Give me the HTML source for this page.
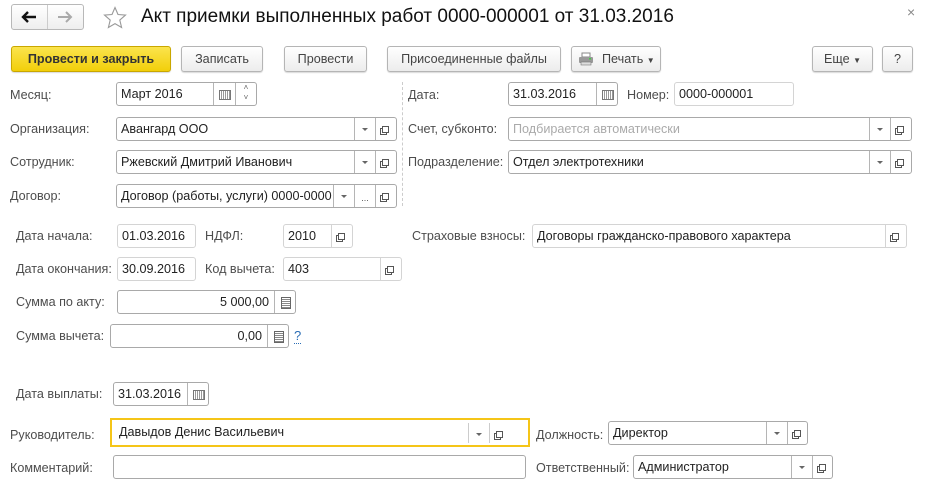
<!DOCTYPE html>
<html><head><meta charset="utf-8"><style>
*{box-sizing:border-box;margin:0;padding:0}
body{width:926px;height:502px;background:#fff;font-family:"Liberation Sans",Arial,sans-serif;font-size:12.6px;color:#333;position:relative;overflow:hidden}
.a{position:absolute}
.lbl{position:absolute;color:#4d4d4d;font-size:12.6px;line-height:16px}
.btn{position:absolute;top:46px;height:26px;border:1px solid #b5b5b5;border-radius:3px;background:linear-gradient(#fff,#ececec);box-shadow:0 1px 1px rgba(0,0,0,.15);text-align:center;line-height:24px;color:#444;font-size:12.6px}
.f{position:absolute;height:24px;border:1px solid #a9a9a9;border-radius:3px;background:#fff;line-height:22px;padding-left:4px;color:#222;white-space:nowrap;overflow:hidden}
.f.l{border-color:#d4d4d4}
.b{position:absolute;top:0;height:22px;width:21px;border-left:1px solid #b5b5b5;text-align:center;line-height:22px;font-size:9px;color:#555}
.dd::after{content:"";position:absolute;left:7px;top:10px;border:3px solid transparent;border-top:3px solid #666}
.op::after{content:"";position:absolute;left:6px;top:8px;width:5px;height:5px;border:1px solid #555;background:#fff;box-shadow:-2px 2px 0 -1px #fff,-2px 2px 0 0 #555}
.cal::after{content:"";position:absolute;left:5px;top:7px;width:10px;height:8px;border:1px solid #777;background:repeating-linear-gradient(90deg,#fff 0 1px,#999 1px 2px)}
.calc::after{content:"";position:absolute;left:6px;top:6px;width:8px;height:10px;border:1px solid #666;background:repeating-linear-gradient(#fff 0 1px,#888 1px 2px)}
</style></head><body>
<div class="a" style="left:11px;top:4px;width:73px;height:26px;border:1px solid #b8b8b8;border-radius:3px;background:linear-gradient(#fff,#eee)"></div>
<div class="a" style="left:47px;top:5px;width:1px;height:24px;background:#ccc"></div>
<svg class="a" style="left:21px;top:10px" width="16" height="14"><path d="M2 7h13M7 2L2 7l5 5" fill="none" stroke="#111" stroke-width="2.4"/></svg>
<svg class="a" style="left:57px;top:10px" width="16" height="14"><path d="M1 7h12M9 2l5 5-5 5" fill="none" stroke="#aaa" stroke-width="2"/></svg>
<svg class="a" style="left:103px;top:6px" width="24" height="23" viewBox="0 0 24 23"><path d="M12 1.5l3 7 7.5.6-5.7 5 1.8 7.4L12 17.6l-6.6 3.9 1.8-7.4L1.5 9.1 9 8.5z" fill="none" stroke="#999" stroke-width="1.1"/></svg>
<div class="a" style="left:141px;top:5px;font-size:19px;line-height:24px;color:#111">Акт приемки выполненных работ 0000-000001 от 31.03.2016</div>
<div class="a" style="left:907px;top:4px;font-size:14px;color:#888">×</div>
<div class="btn" style="left:11px;width:160px;background:linear-gradient(#fbe44d,#f2cf0a);border-color:#c9a700;font-weight:bold;color:#333">Провести и закрыть</div>
<div class="btn" style="left:181px;width:82px">Записать</div>
<div class="btn" style="left:284px;width:83px">Провести</div>
<div class="btn" style="left:387px;width:174px">Присоединенные файлы</div>
<div class="btn" style="left:571px;width:90px;text-align:left;padding-left:30px">Печать <span style="font-size:8px">▼</span></div>
<svg class="a" style="left:578px;top:52px" width="16" height="14"><rect x="4" y="1" width="8" height="4" fill="#fff" stroke="#888"/><rect x="1" y="5" width="14" height="6" rx="1" fill="#999"/><rect x="3" y="10" width="10" height="3" fill="#ddd" stroke="#777" stroke-width=".6"/><rect x="11" y="6" width="2" height="1.5" fill="#4c4"/></svg>
<div class="btn" style="left:812px;width:61px">Еще <span style="font-size:8px">▼</span></div>
<div class="btn" style="left:882px;width:31px">?</div>
<div class="a" style="left:402px;top:82px;height:124px;border-left:1px dashed #ccc"></div>
<div class="lbl" style="left:10px;top:87px">Месяц:</div>
<div class="f" style="left:116px;top:82px;width:141px">Март 2016<div class="b cal" style="left:96px;width:22px"></div><div class="b" style="left:118px;width:21px;line-height:10px;font-size:8px;color:#666">˄<br>˅</div></div>
<div class="lbl" style="left:408px;top:87px">Дата:</div>
<div class="f" style="left:508px;top:82px;width:110px">31.03.2016<div class="b cal" style="left:87px"></div></div>
<div class="lbl" style="left:627px;top:87px">Номер:</div>
<div class="f l" style="left:674px;top:82px;width:120px">0000-000001</div>
<div class="lbl" style="left:10px;top:121px">Организация:</div>
<div class="f" style="left:116px;top:117px;width:281px">Авангард ООО<div class="b dd" style="left:237px"></div><div class="b op" style="left:258px"></div></div>
<div class="lbl" style="left:408px;top:121px">Счет, субконто:</div>
<div class="f" style="left:508px;top:117px;width:404px;color:#aaa">Подбирается автоматически<div class="b dd" style="left:360px"></div><div class="b op" style="left:381px"></div></div>
<div class="lbl" style="left:10px;top:154px">Сотрудник:</div>
<div class="f" style="left:116px;top:150px;width:281px">Ржевский Дмитрий Иванович<div class="b dd" style="left:237px"></div><div class="b op" style="left:258px"></div></div>
<div class="lbl" style="left:408px;top:154px">Подразделение:</div>
<div class="f" style="left:508px;top:150px;width:404px">Отдел электротехники<div class="b dd" style="left:360px"></div><div class="b op" style="left:381px"></div></div>
<div class="lbl" style="left:10px;top:188px">Договор:</div>
<div class="f" style="left:116px;top:184px;width:281px">Договор (работы, услуги) 0000-0000<div class="b dd" style="left:216px;background:#fff"></div><div class="b" style="left:237px;line-height:26px">...</div><div class="b op" style="left:258px"></div></div>
<div class="lbl" style="left:16px;top:228px">Дата начала:</div>
<div class="f l" style="left:117px;top:224px;width:79px">01.03.2016</div>
<div class="lbl" style="left:205px;top:228px">НДФЛ:</div>
<div class="f l" style="left:283px;top:224px;width:70px">2010<div class="b op" style="left:47px;border-color:#d4d4d4"></div></div>
<div class="lbl" style="left:412px;top:228px">Страховые взносы:</div>
<div class="f l" style="left:532px;top:224px;width:375px">Договоры гражданско-правового характера<div class="b op" style="left:352px;border-color:#d4d4d4"></div></div>
<div class="lbl" style="left:16px;top:261px">Дата окончания:</div>
<div class="f l" style="left:117px;top:257px;width:79px">30.09.2016</div>
<div class="lbl" style="left:205px;top:261px">Код вычета:</div>
<div class="f l" style="left:283px;top:257px;width:119px">403<div class="b op" style="left:96px;border-color:#d4d4d4"></div></div>
<div class="lbl" style="left:16px;top:294px">Сумма по акту:</div>
<div class="f" style="left:117px;top:290px;width:179px;text-align:right;padding-right:26px">5 000,00<div class="b calc" style="left:156px"></div></div>
<div class="lbl" style="left:16px;top:328px">Сумма вычета:</div>
<div class="f" style="left:110px;top:324px;width:179px;text-align:right;padding-right:26px">0,00<div class="b calc" style="left:156px"></div></div>
<div class="a" style="left:294px;top:328px;color:#2a6db5;font-size:13px;border-bottom:1px dotted #2a6db5;line-height:15px">?</div>
<div class="lbl" style="left:16px;top:386px">Дата выплаты:</div>
<div class="f" style="left:113px;top:382px;width:96px">31.03.2016<div class="b cal" style="left:73px"></div></div>
<div class="lbl" style="left:10px;top:427px">Руководитель:</div>
<div class="a" style="left:110px;top:418px;width:420px;height:29px;border:2px solid #f5c518;background:#fff"><div class="a" style="left:7px;top:5px;color:#222">Давыдов Денис Васильевич</div><div class="b dd" style="left:356px;top:3px;height:20px;border-color:#ccc"></div><div class="b op" style="left:377px;top:3px;height:20px;border-color:#ccc"></div></div>
<div class="lbl" style="left:536px;top:427px">Должность:</div>
<div class="f" style="left:608px;top:421px;width:200px">Директор<div class="b dd" style="left:157px"></div><div class="b op" style="left:178px"></div></div>
<div class="lbl" style="left:10px;top:460px">Комментарий:</div>
<div class="f" style="left:113px;top:455px;width:413px"></div>
<div class="lbl" style="left:536px;top:460px">Ответственный:</div>
<div class="f" style="left:633px;top:455px;width:200px">Администратор<div class="b dd" style="left:157px"></div><div class="b op" style="left:178px"></div></div>
</body></html>
